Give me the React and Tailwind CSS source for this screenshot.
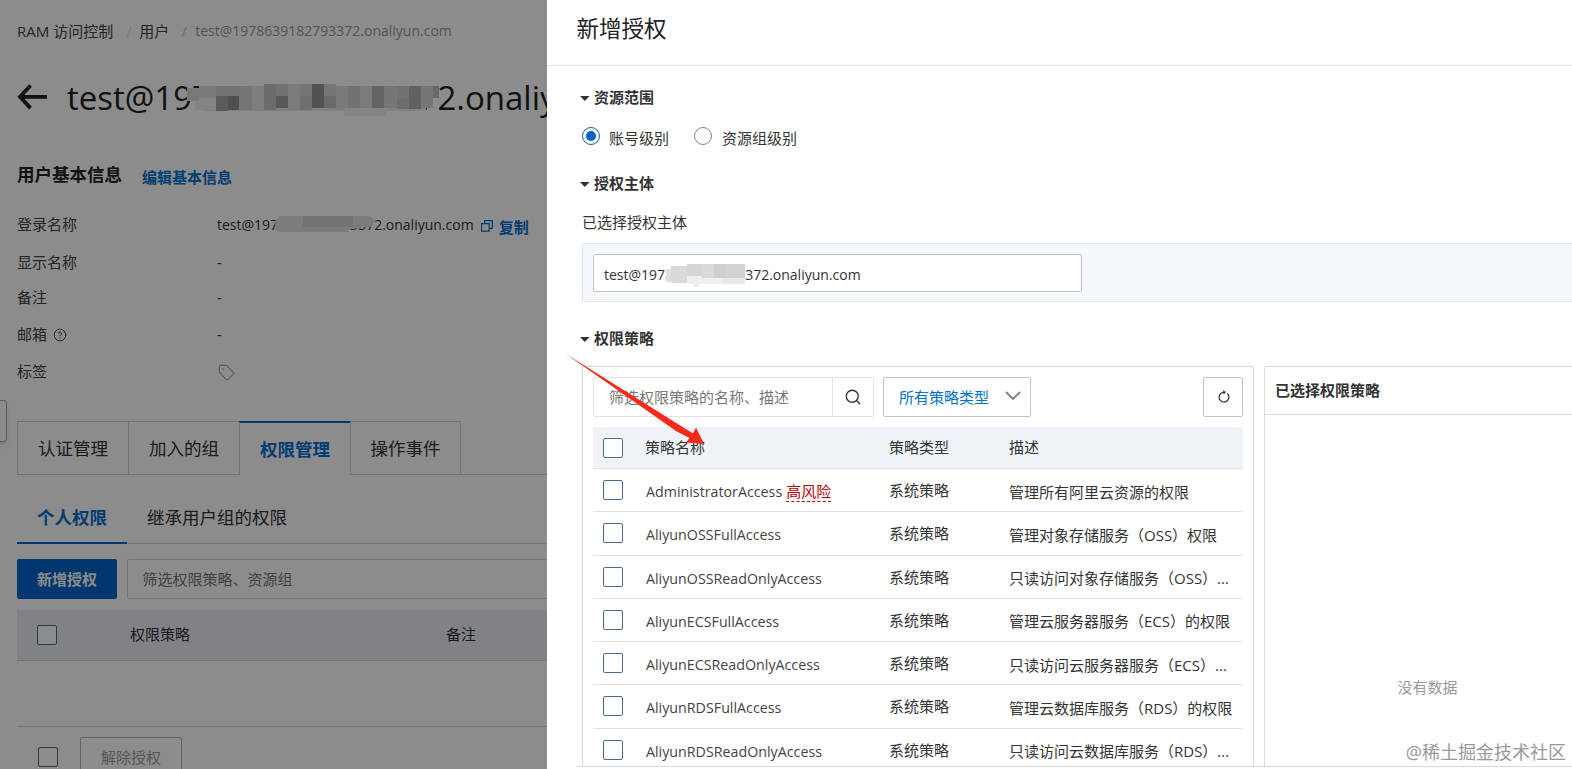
import { CircleHelp, Search, Tag } from "lucide-react";

const policies = [
    { name: "AdministratorAccess", risk: "高风险", desc: "管理所有阿里云资源的权限" },
    { name: "AliyunOSSFullAccess", desc: "管理对象存储服务（OSS）权限" },
    { name: "AliyunOSSReadOnlyAccess", desc: "只读访问对象存储服务（OSS）..." },
    { name: "AliyunECSFullAccess", desc: "管理云服务器服务（ECS）的权限" },
    { name: "AliyunECSReadOnlyAccess", desc: "只读访问云服务器服务（ECS）..." },
    { name: "AliyunRDSFullAccess", desc: "管理云数据库服务（RDS）的权限" },
    { name: "AliyunRDSReadOnlyAccess", desc: "只读访问云数据库服务（RDS）..." },
];

// x, y, width, height, colour
const titleMosaic = [
    [17, 3, 222, 24, "#ececec"], [8, 14, 12, 12, "#f1f1f1"],
    [0, 4, 12, 13, "#dadada"], [12, 2, 17, 12, "#dfdfdf"], [17, 14, 12, 12, "#eeeeee"],
    [29, 2, 23, 11, "#d1d1d1"], [29, 12, 12, 15, "#a7a7a7"], [41, 12, 12, 14, "#919191"],
    [52, 2, 13, 24, "#d6d6d6"], [65, 2, 12, 25, "#e5e5e5"], [77, 0, 12, 26, "#c4c4c4"],
    [89, 0, 12, 12, "#cfcfcf"], [89, 12, 12, 12, "#a0a0a0"], [101, 0, 12, 26, "#e1e1e1"],
    [113, 0, 12, 12, "#d5d5d5"], [113, 12, 12, 14, "#cacaca"], [125, 0, 12, 24, "#959595"],
    [137, 0, 12, 12, "#d8d8d8"], [137, 12, 12, 12, "#bfbfbf"], [149, 2, 12, 24, "#dedede"],
    [161, 2, 12, 23, "#cfcfcf"], [157, 24, 42, 8, "#f0f0f0"], [173, 2, 12, 22, "#e1e1e1"],
    [185, 2, 12, 22, "#b6b6b6"], [197, 2, 13, 22, "#d8d8d8"], [210, 2, 12, 12, "#cfcfcf"],
    [210, 14, 12, 11, "#c8c8c8"], [222, 2, 12, 23, "#b2b2b2"], [234, 2, 12, 22, "#d8d8d8"],
    [246, 2, 6, 12, "#c0c0c0"],
];

const inputMosaic = [
    [0, 5, 10, 13, "#dedede"], [5, 2, 16, 17, "#dadada"], [21, 0, 14, 12, "#d6d6d6"],
    [21, 12, 14, 8, "#ededed"], [35, 0, 13, 14, "#d9d9d9"], [27, 12, 6, 11, "#eeeeee"],
    [33, 14, 24, 6, "#efefef"], [48, 0, 12, 14, "#cfcfcf"], [60, 0, 19, 14, "#d2d2d2"],
    [57, 14, 22, 6, "#e8e8e8"],
];

const Mosaic = ({ cells, className }) => (
    <svg className={`absolute ${className}`}>
        {cells.map(([x, y, w, h, fill], i) => (
            <rect key={i} x={x} y={y} width={w} height={h} fill={fill} />
        ))}
    </svg>
);

const Checkbox = ({ className = "" }) => (
    <span className={`block h-5 w-5 shrink-0 rounded-[2px] border border-[#4b6a92] bg-white ${className}`} />
);

const SectionTitle = ({ children }) => (
    <div className="flex h-5 items-center text-[15px] font-semibold leading-5">
        <svg width="10" height="6" className="mr-1 mt-1">
            <path d="M0 0h9.5L4.8 5z" fill="#333" />
        </svg>
        {children}
    </div>
);

const InfoRow = ({ label, children, className }) => (
    <div className={`flex h-5 ${className}`}>
        <div className="flex w-[200px] items-center gap-1.5 text-[#444]">{label}</div>
        <div className="flex items-center">{children}</div>
    </div>
);

const UserPage = () => (
    <div className="relative h-[769px] w-[547px] shrink-0 overflow-hidden bg-white pl-[17px]">
        <div className="mt-[21px] flex h-5 items-center whitespace-nowrap text-[#444]">
            <span>RAM 访问控制</span>
            <span className="ml-[13px] w-[13px] text-[#e4e4e4]">/</span>
            <span>用户</span>
            <span className="ml-[12px] w-[14px] text-[#ccc]">/</span>
            <span className="text-[14px] text-[#999]">test@1978639182793372.onaliyun.com</span>
        </div>

        <div className="mt-[33px] flex h-12 items-center overflow-hidden whitespace-nowrap text-[33px] text-[#222]">
            <svg width="30" height="26" className="-mt-0.5 mr-5 shrink-0" fill="none" stroke="#222" strokeWidth="3.8">
                <path d="M13.5 1.5L3 12.8l10.5 11.3M3 12.8h27" />
            </svg>
            <span>test@1978639182793372.onaliyun.com</span>
        </div>

        <div className="mt-[40px] flex h-6 items-center">
            <h2 className="text-[17.5px] font-bold text-[#222]">用户基本信息</h2>
            <a className="ml-5 mt-1.5 font-bold text-[#0070cc]">编辑基本信息</a>
        </div>

        <InfoRow label="登录名称" className="mt-[28px]">
            <span className="pt-0.5 text-[14px]">test@1978639182793372.onaliyun.com</span>
            <svg width="12" height="12" viewBox="0 0 12 12" className="ml-[7px] mt-1" fill="none" stroke="#0070cc" strokeWidth="1.2">
                <path d="M.6 3.6h7.6v7.6H.6zM3.6 3.6V.6h7.8v7.8H8.2" />
            </svg>
            <a className="ml-[6px] mt-1.5 font-bold text-[#0070cc]">复制</a>
        </InfoRow>
        <InfoRow label="显示名称" className="mt-[18px]">-</InfoRow>
        <InfoRow label="备注" className="mt-[15px]">-</InfoRow>
        <InfoRow label={<>邮箱 <CircleHelp size={14} strokeWidth={1.7} className="mt-0.5" /></>} className="mt-[17px]">-</InfoRow>
        <InfoRow label="标签" className="mt-[17px]">
            <Tag size={17} strokeWidth={1.7} className="ml-[1px] mt-0.5 text-[#aaa]" />
        </InfoRow>

        <div className="mt-[40px] flex h-[54px] text-[17.5px] text-[#333]">
            <div className="flex w-[111px] items-center justify-center border border-r-0 border-[#d5d5d5]">认证管理</div>
            <div className="flex w-[111px] items-center justify-center border border-r-0 border-[#d5d5d5]">加入的组</div>
            <div className="flex w-[111px] items-center justify-center border-l border-t-2 border-l-[#d5d5d5] border-t-[#0064c8] font-bold text-[#0070cc]">权限管理</div>
            <div className="flex w-[111px] items-center justify-center border border-[#d5d5d5]">操作事件</div>
            <div className="flex-1 border-b border-[#d5d5d5]" />
        </div>

        <div className="mt-[14px] flex h-[55px] border-b border-[#d5d5d5] text-[17.5px] text-[#333]">
            <div className="flex h-[55px] w-[110px] items-center justify-center border-b-2 border-[#0064c8] pt-0.5 font-bold text-[#0070cc]">个人权限</div>
            <div className="flex items-center pl-5 pt-0.5">继承用户组的权限</div>
        </div>

        <div className="mt-[15px] flex h-10 gap-2.5">
            <div className="flex w-[100px] items-center justify-center rounded-[2px] bg-[#0064c8] font-bold text-white">新增授权</div>
            <div className="flex flex-1 items-center rounded-l-[2px] border border-r-0 border-[#d5d5d5] pl-[14.5px] text-[#777]">筛选权限策略、资源组</div>
        </div>

        <div className="mt-[11px] flex h-[51px] items-center border-b border-[#d5d5d5] bg-[#eaedf5] pl-5">
            <Checkbox />
            <span className="ml-[73px] w-[316px] pb-0.5">权限策略</span>
            <span className="pb-0.5">备注</span>
        </div>
        <div className="h-[66px] border-b border-[#d5d5d5]" />
        <div className="flex pl-[21px] pt-[10px]">
            <Checkbox className="mt-[10px]" />
            <div className="ml-[22px] flex h-10 w-[102px] items-center justify-center rounded-[2px] border border-[#b5b5b5] text-[#a0a0a0]">解除授权</div>
        </div>

        {/* masked account ids */}
        <Mosaic cells={titleMosaic} className="left-[187px] top-[84px] h-[33px] w-[253px]" />
        <svg className="absolute left-[275px] top-[215px] h-[18px] w-[102px]">
            <path d="M0 6L5 1h89l6 4-4 7-22 2-1 3H8L1 16z" fill="#e2e2e2" />
            <path d="M28 1h50v11H28z" fill="#d4d4d4" />
        </svg>

        {/* collapsed side menu handle */}
        <div className="absolute -left-1 top-[400px] h-[42px] w-[11px] rounded-[3px] border border-[#aaa] bg-white shadow-md" />
        {/* drawer backdrop */}
        <div className="absolute inset-0 bg-black/45" />
    </div>
);

const PolicyTable = () => (
    <div className="h-[400px] w-[672px] shrink-0 overflow-hidden rounded-t-[2px] border border-b-0 border-[#d8dadd] px-[10px] pt-[10px]">
        <div className="flex h-10">
            <div className="flex w-[281px] rounded-[2px] border border-[#e0e2e4]">
                <div className="flex w-[239px] items-center border-r border-[#e0e2e4] pl-[15px] text-[#777]">筛选权限策略的名称、描述</div>
                <div className="flex flex-1 items-center justify-center"><Search size={18} strokeWidth={1.8} /></div>
            </div>
            <div className="ml-[9px] flex w-[148px] items-center justify-between rounded-[2px] border border-[#c0c4c8] pl-[15px] pr-[9px] text-[#0070cc]">
                所有策略类型
                <svg width="16" height="10" className="mb-0.5" fill="none" stroke="#808080" strokeWidth="1.9">
                    <path d="M1 1l7 7 7-7" />
                </svg>
            </div>
            <div className="ml-auto flex w-10 items-center justify-center rounded-[2px] border border-[#c0c4c8]">
                <svg width="12" height="13" viewBox="0 0 12 13" fill="none" stroke="#333" strokeWidth="1.2" className="mb-0.5 ml-0.5">
                    <path d="M9.3 3.5A4.9 4.9 0 1 1 3.4 3L5.8 2.2" />
                    <path d="M5 .2L8 2.1 5.6 4.4z" fill="#333" stroke="none" />
                </svg>
            </div>
        </div>
        <div className="mt-[10px] flex h-[42px] items-center border-b border-[#dfe2e6] bg-[#eff3f8] pl-[10px]">
            <Checkbox />
            <span className="ml-[22px] w-[244px] pb-0.5">策略名称</span>
            <span className="w-[120px] pb-0.5">策略类型</span>
            <span className="pb-0.5">描述</span>
        </div>
        {policies.map((p) => (
            <div key={p.name} className="flex h-[43.25px] items-center whitespace-nowrap border-b border-[#dfe2e6] pl-[10px]">
                <Checkbox />
                <span className="ml-[23px] flex w-[243px] items-center gap-[5px] pt-1">
                    <span className="text-[14.25px] text-[#444]">{p.name}</span>
                    {p.risk && <span className="-ml-px h-5 border-b border-dashed border-[#b00000] leading-[18px] text-[#b80000]">{p.risk}</span>}
                </span>
                <span className="w-[120px]">系统策略</span>
                <span className="pt-[3px]">{p.desc}</span>
            </div>
        ))}
    </div>
);

const Drawer = () => (
    <div className="relative h-[769px] flex-1 overflow-hidden bg-white">
        <div className="flex h-[66px] items-center border-b border-[#e2e4e6] pb-[7px] pl-[29.5px] text-[22.5px] text-[#222]">新增授权</div>
        <div className="pl-[33px] pt-[21px]">
            <SectionTitle>资源范围</SectionTitle>
            <div className="mt-[19px] flex h-6 items-center pl-[2px]">
                <span className="-mt-1 flex h-[18px] w-[18px] items-center justify-center rounded-full border border-[#0064c8]">
                    <span className="h-[10px] w-[10px] rounded-full bg-[#0064c8]" />
                </span>
                <span className="ml-[9px]">账号级别</span>
                <span className="-mt-1 ml-[25px] h-[18px] w-[18px] rounded-full border border-[#7a86a0]" />
                <span className="ml-[10px]">资源组级别</span>
            </div>
            <div className="mt-[23px]"><SectionTitle>授权主体</SectionTitle></div>
            <div className="ml-[2px] mt-[19px] h-5 leading-5">已选择授权主体</div>
            <div className="ml-[2px] mt-[11px] h-[59px] rounded-l-[2px] border border-r-0 border-[#e1e6ea] bg-[#f5f9fc] p-[10px]">
                <div className="relative flex h-[38px] w-[489px] items-center rounded-[2px] border border-[#c0c4c8] bg-white pl-[10px] pt-[3px] text-[14px]">
                    test@1978639182793372.onaliyun.com
                    <Mosaic cells={inputMosaic} className="left-[72px] top-[9px] h-[24px] w-[80px]" />
                </div>
            </div>
            <div className="mt-[26px]"><SectionTitle>权限策略</SectionTitle></div>
            <div className="ml-[2px] mt-[18px] flex gap-[10px]">
                <PolicyTable />
                <div className="flex h-[400px] flex-1 flex-col rounded-tl-[2px] border border-b-0 border-r-0 border-[#d8dadd]">
                    <div className="flex h-[48px] items-center border-b border-[#d8dadd] pb-0.5 pl-[10px] font-semibold">已选择权限策略</div>
                    <div className="mt-[262px] pl-[18px] text-center text-[#999]">没有数据</div>
                </div>
            </div>
        </div>
        <div className="pl-[30px]">
            <div className="border-t border-[#d8dadd]" />
        </div>

        {/* pointer to the policy name column */}
        <svg className="absolute left-[19px] top-[354px] h-[96px] w-[142px]">
            <path d="M0 0L127 79.5L130 73.5L138 90L120 88.5L123.5 84L110 77z" fill="#f9281c" />
        </svg>
        <div className="absolute right-[6px] top-[740px] text-[18px] leading-6 text-[#999] [text-shadow:1px_1px_1px_#fff]">@稀土掘金技术社区</div>
    </div>
);

export default function App() {
    return (
        <div className="flex h-[769px] w-[1572px] overflow-hidden font-['Open_Sans','Noto_Sans_CJK_SC',sans-serif] text-[15px] leading-5 text-[#333]">
            <UserPage />
            <Drawer />
        </div>
    );
}
